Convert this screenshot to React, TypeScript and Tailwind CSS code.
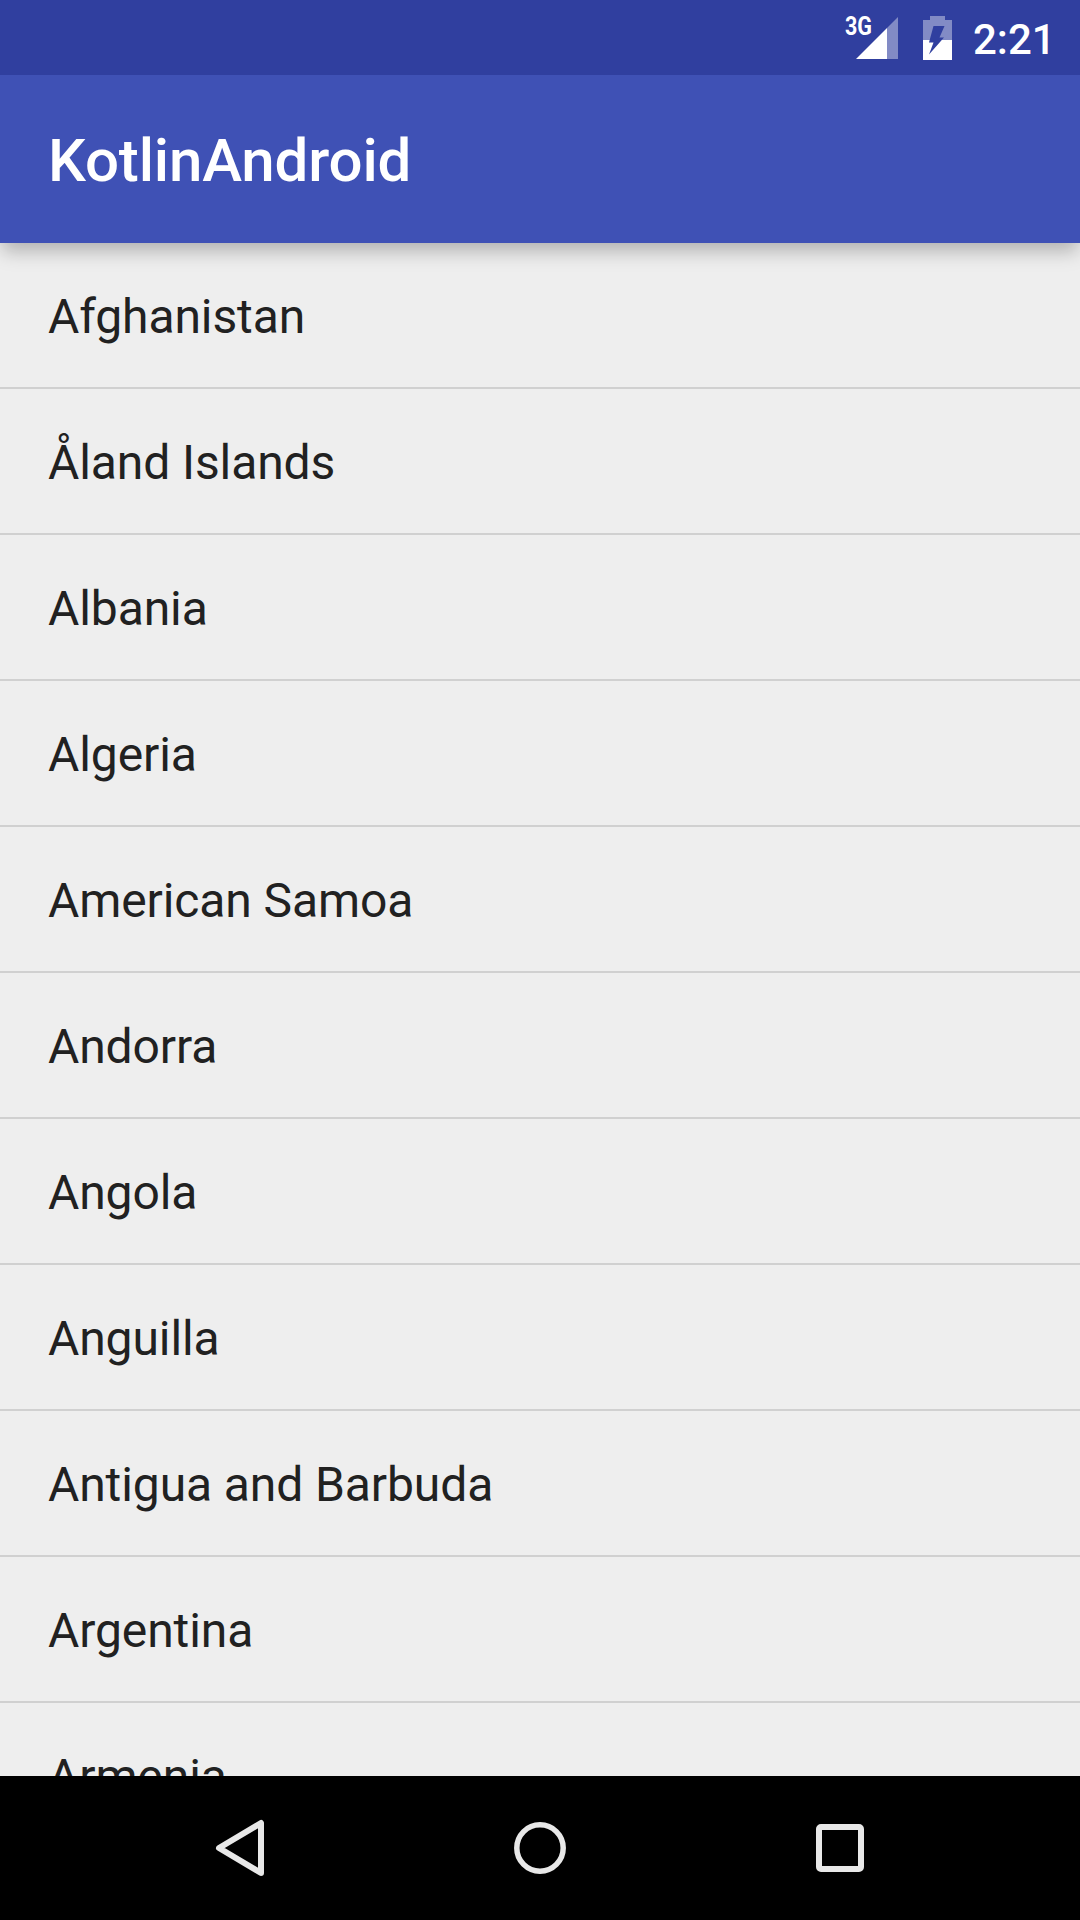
const countries = [
  "Afghanistan",
  "Åland Islands",
  "Albania",
  "Algeria",
  "American Samoa",
  "Andorra",
  "Angola",
  "Anguilla",
  "Antigua and Barbuda",
  "Argentina",
  "Armenia",
];

const SignalIcon = () => (
  <div className="relative mr-[25px] h-[75px] w-[52px]">
    <span className="absolute left-[-1px] top-[13px] origin-left scale-x-[0.86] text-[25px] font-bold leading-[28px] text-white">
      3G
    </span>
    <svg className="absolute left-0 top-0" width="52" height="75" viewBox="0 0 52 75">
      <path d="M52 17 V59 H41 V28 Z" fill="#ffffff" fillOpacity="0.4" />
      <path d="M41 28 V59 H10 Z" fill="#ffffff" />
    </svg>
  </div>
);

const BatteryIcon = () => (
  <svg className="mr-[21px]" width="29" height="44" viewBox="0 0 29 44">
    <path d="M7 0 H22 V4 H29 V24 H0 V4 H7 Z" fill="#ffffff" fillOpacity="0.4" />
    <path d="M0 24 H29 V44 H0 Z" fill="#ffffff" />
    <path d="M10.5 10 H21.5 L16.5 21.5 H21 L6 38.5 L10.5 26.5 H6 Z" fill="#303F9F" />
  </svg>
);

const StatusBar = () => (
  <div className="relative z-20 flex h-[75px] shrink-0 items-center justify-end bg-[#303F9F] pr-[29px]">
    <SignalIcon />
    <BatteryIcon />
    <span className="relative top-[2px] w-[78px] text-[42px] font-medium text-white">2:21</span>
  </div>
);

const NavBar = () => (
  <div className="flex h-[144px] shrink-0 items-center justify-center gap-[240px] bg-black">
    <svg width="60" height="60" viewBox="0 0 60 60" fill="none" stroke="#E8E8E8" strokeWidth="6" strokeLinejoin="round">
      <path d="M51 5 V55 L9 30 Z" />
    </svg>
    <svg width="60" height="60" viewBox="0 0 60 60" fill="none" stroke="#E8E8E8" strokeWidth="5.5">
      <circle cx="30" cy="30" r="23.2" />
    </svg>
    <svg width="60" height="60" viewBox="0 0 60 60" fill="none" stroke="#E8E8E8" strokeWidth="6">
      <rect x="9" y="9" width="42" height="42" rx="2" />
    </svg>
  </div>
);

export default function App() {
  return (
    <div className="flex h-[1920px] w-[1080px] flex-col overflow-hidden bg-[#EEEEEE] font-['Roboto',sans-serif]">
      <StatusBar />
      <header className="relative z-10 flex h-[168px] shrink-0 items-center bg-[#3F51B5] pl-[48px] shadow-[0_10px_18px_-2px_rgba(0,0,0,0.26)]">
        <h1 className="relative top-[2px] text-[60px] font-medium tracking-[-0.15px] text-white">KotlinAndroid</h1>
      </header>
      <ul className="min-h-0 flex-1 overflow-hidden">
        {countries.map((name) => (
          <li
            key={name}
            className="flex h-[146px] items-center border-b-2 border-[#D0D0D0] pl-[48px] text-[48px] tracking-[-0.1px] text-[#212121]"
          >
            <span className="relative top-[2px]">{name}</span>
          </li>
        ))}
      </ul>
      <NavBar />
    </div>
  );
}
